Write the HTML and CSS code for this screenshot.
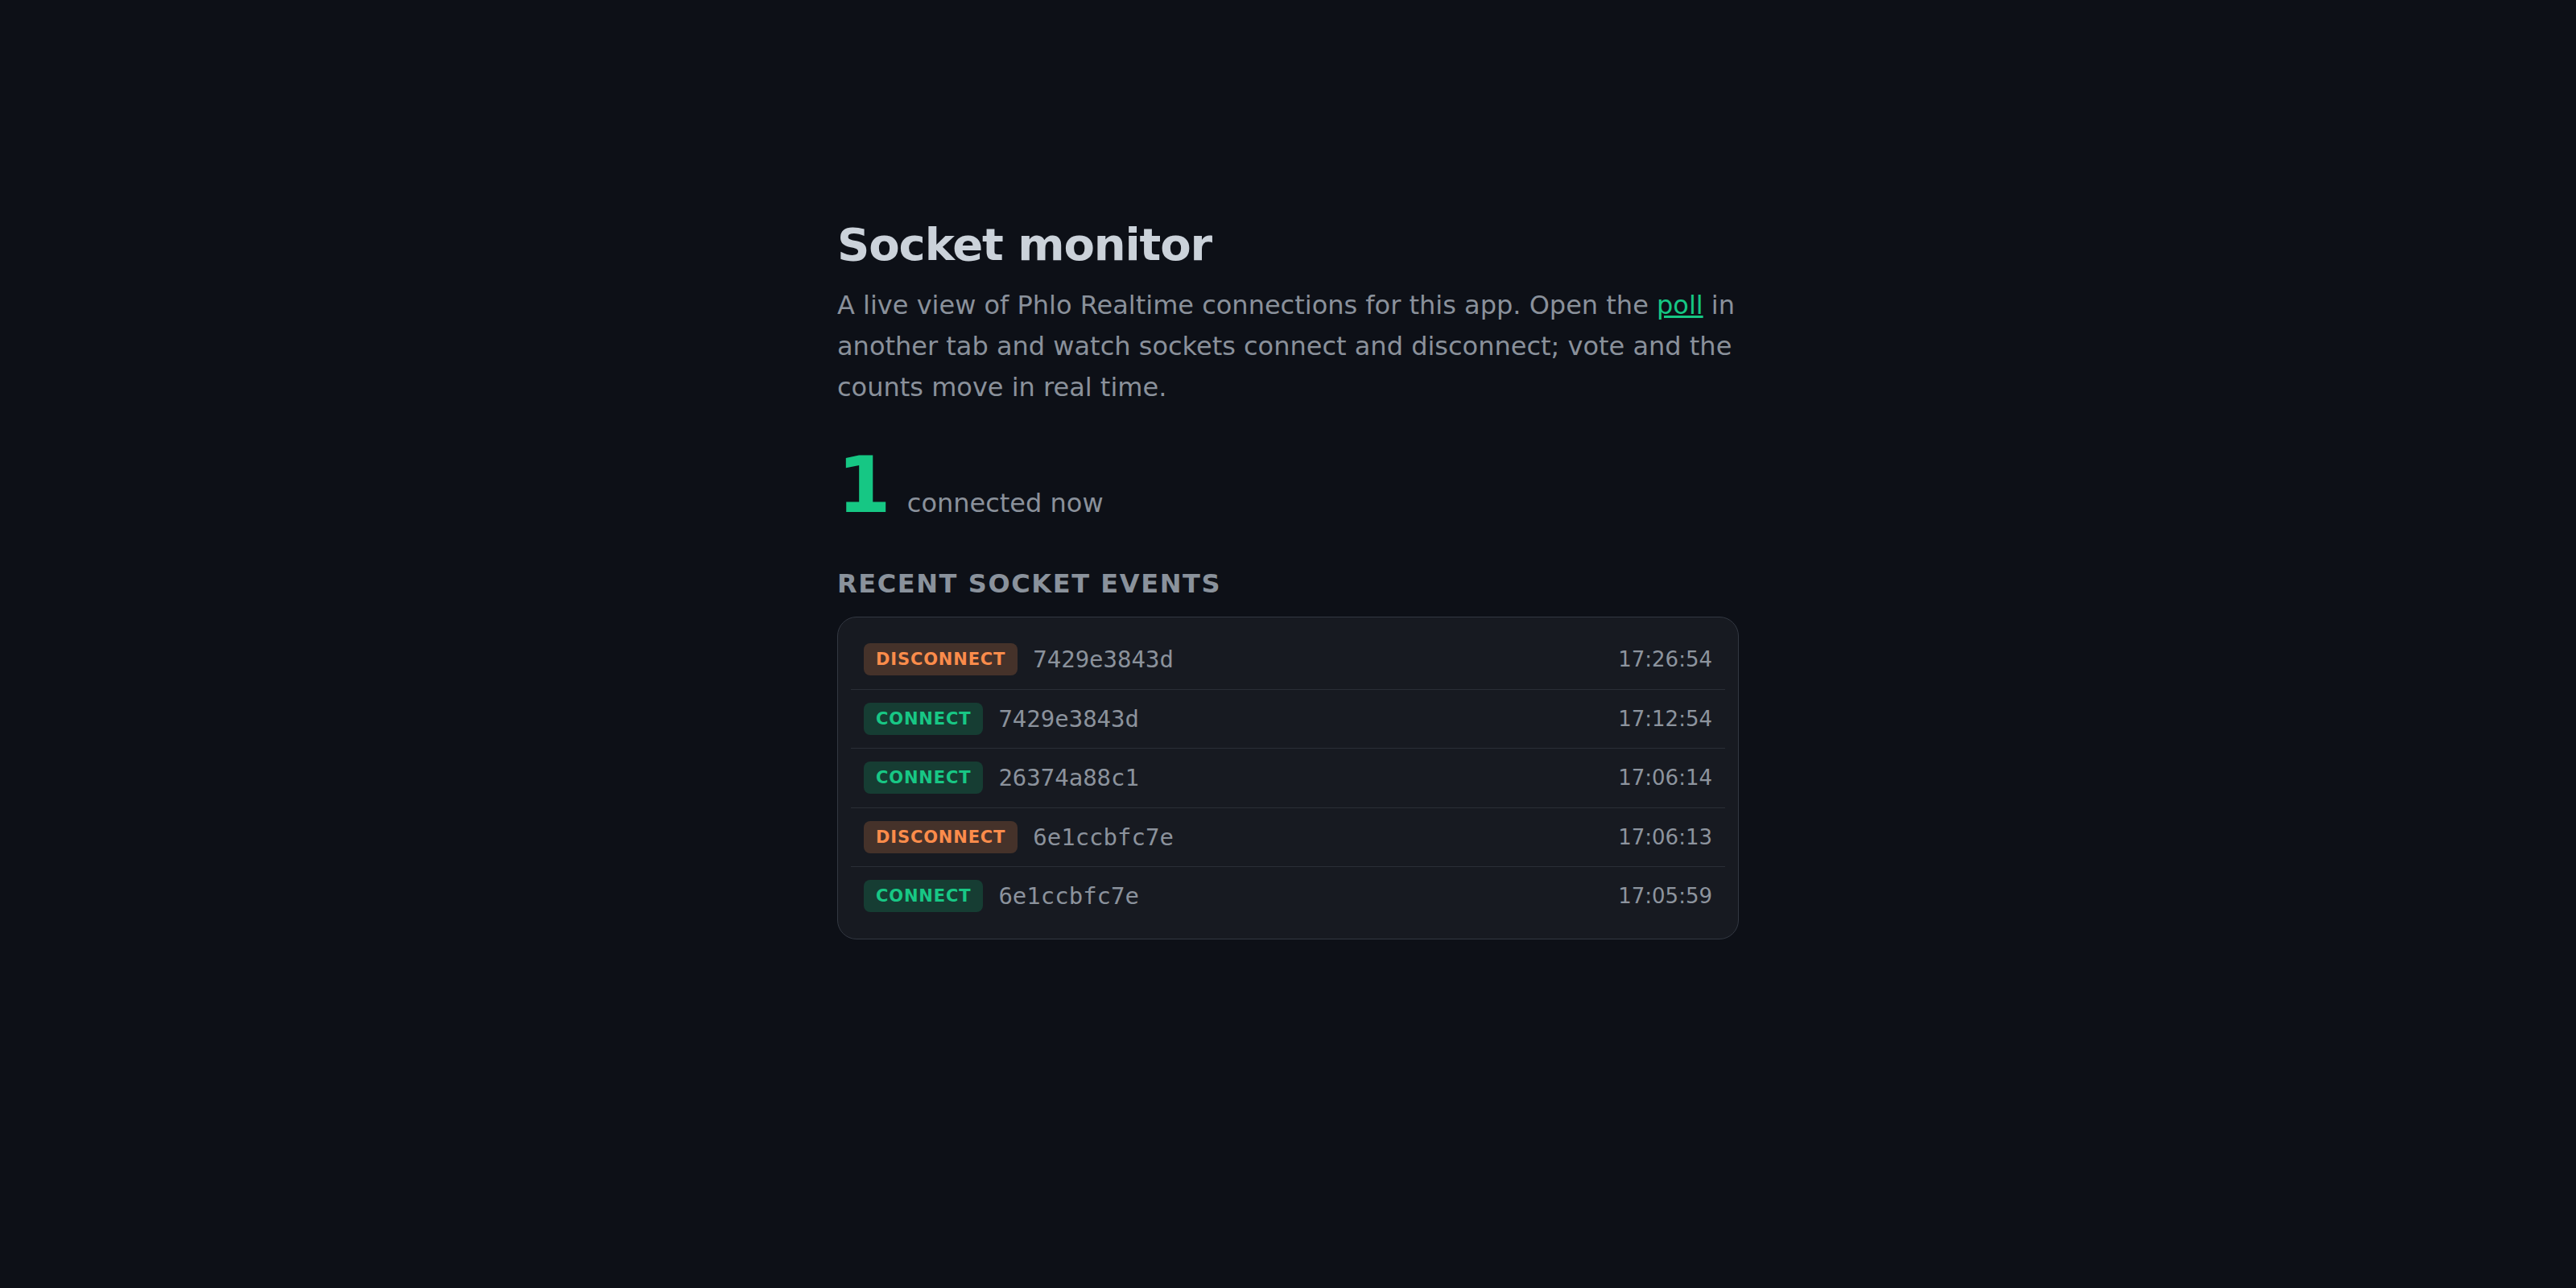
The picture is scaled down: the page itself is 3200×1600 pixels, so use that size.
FILE: index.html
```html
<!DOCTYPE html>
<html lang="en">
<head>
  <meta charset="UTF-8">
  <meta name="viewport" content="width=device-width, initial-scale=1.0">
  <title>Socket monitor</title>
  <link rel="stylesheet" href="styles.css">
</head>
<body>
  <main class="monitor">
    <h1 class="title">Socket monitor</h1>
    <p class="intro">
      A live view of Phlo Realtime connections for this app. Open the <a href="#">poll</a> in
      another tab and watch sockets connect and disconnect; vote and the counts move in real time.
    </p>

    <div class="stat">
      <span class="stat-count">1</span>
      <span class="stat-label">connected now</span>
    </div>

    <h2 class="section-label">Recent socket events</h2>
    <ul class="events">
      <li class="event">
        <span class="badge disconnect">DISCONNECT</span>
        <span class="socket-id">7429e3843d</span>
        <span class="time">17:26:54</span>
      </li>
      <li class="event">
        <span class="badge connect">CONNECT</span>
        <span class="socket-id">7429e3843d</span>
        <span class="time">17:12:54</span>
      </li>
      <li class="event">
        <span class="badge connect">CONNECT</span>
        <span class="socket-id">26374a88c1</span>
        <span class="time">17:06:14</span>
      </li>
      <li class="event">
        <span class="badge disconnect">DISCONNECT</span>
        <span class="socket-id">6e1ccbfc7e</span>
        <span class="time">17:06:13</span>
      </li>
      <li class="event">
        <span class="badge connect">CONNECT</span>
        <span class="socket-id">6e1ccbfc7e</span>
        <span class="time">17:05:59</span>
      </li>
    </ul>
  </main>
</body>
</html>
```

FILE: styles.css
```css
body {
  margin: 0;
  background-color: #0d1017;
  font-family: "DejaVu Sans", sans-serif;
  color: #8a919b;
}

.monitor {
  width: 1120px;
  margin: 0 auto;
  padding-top: 270px;
}

.title {
  margin: 0 0 17px;
  font-size: 56px;
  line-height: 1.2;
  font-weight: bold;
  letter-spacing: -0.02em;
  color: #cbd2da;
}

.intro {
  margin: 0;
  font-size: 32px;
  line-height: 51px;
  color: #8a919b;
}

.intro a {
  color: #16c784;
}

.stat {
  display: flex;
  align-items: baseline;
  gap: 20px;
  margin-top: 48px;
}

.stat-count {
  font-size: 96px;
  line-height: 1;
  font-weight: bold;
  color: #16c784;
}

.stat-label {
  font-size: 32px;
  color: #8a919b;
}

.section-label {
  margin: 55px 0 22px;
  font-size: 32px;
  line-height: normal;
  font-weight: bold;
  letter-spacing: 0.05em;
  text-transform: uppercase;
  color: #8a929c;
}

.events {
  list-style: none;
  margin: 0;
  padding: 16px;
  background-color: #171a21;
  border: 1px solid #333842;
  border-radius: 24px;
}

.event {
  display: flex;
  align-items: center;
  gap: 19px;
  padding: 16.25px 16px;
  border-bottom: 1px solid #2a2e36;
}

.event:last-child {
  border-bottom: none;
}

.badge {
  height: 40px;
  line-height: 40px;
  padding: 0 15px;
  border-radius: 8px;
  font-size: 21px;
  font-weight: bold;
  letter-spacing: 0.04em;
}

.badge.disconnect {
  background-color: #45322a;
  color: #fb8c4b;
}

.badge.connect {
  background-color: #163d33;
  color: #18c785;
}

.socket-id {
  font-family: "DejaVu Sans Mono", monospace;
  font-size: 29px;
  color: #8b929c;
}

.time {
  margin-left: auto;
  font-size: 26px;
  color: #8d949e;
}
```
